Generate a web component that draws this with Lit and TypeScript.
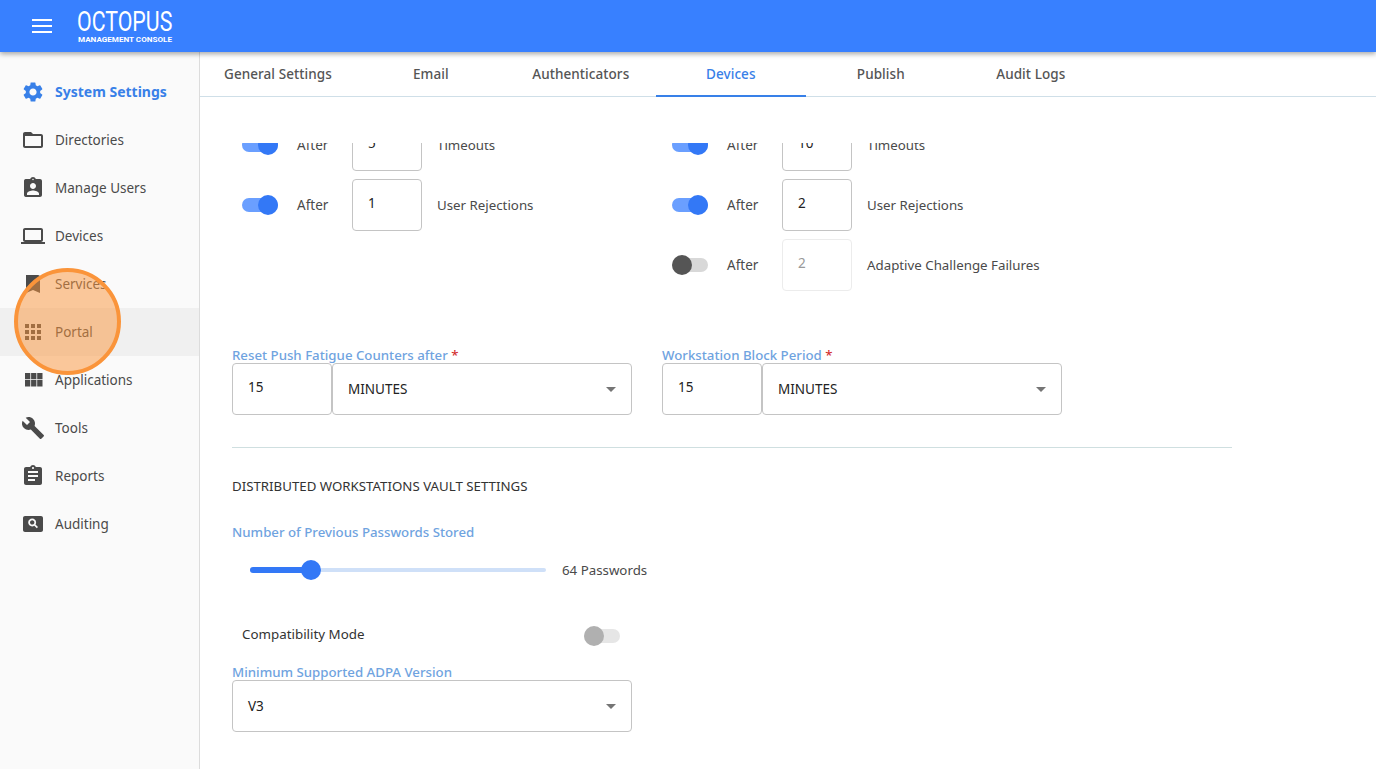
import { LitElement, html, css, svg } from 'lit';
import { customElement } from 'lit/decorators.js';

const icons: Record<string, unknown> = {
  settings: svg`<path d="M19.14 12.94c.04-.3.06-.61.06-.94 0-.32-.02-.64-.07-.94l2.03-1.58a.49.49 0 0 0 .12-.61l-1.92-3.32a.488.488 0 0 0-.59-.22l-2.39.96c-.5-.38-1.03-.7-1.62-.94l-.36-2.54a.484.484 0 0 0-.48-.41h-3.84c-.24 0-.43.17-.47.41l-.36 2.54c-.59.24-1.13.57-1.62.94l-2.39-.96c-.22-.08-.47 0-.59.22L2.74 8.87c-.12.21-.08.47.12.61l2.03 1.58c-.05.3-.09.63-.09.94s.02.64.07.94l-2.03 1.58a.49.49 0 0 0-.12.61l1.92 3.32c.12.22.37.29.59.22l2.39-.96c.5.38 1.03.7 1.62.94l.36 2.54c.05.24.24.41.48.41h3.84c.24 0 .44-.17.47-.41l.36-2.54c.59-.24 1.13-.56 1.62-.94l2.39.96c.22.08.47 0 .59-.22l1.92-3.32c.12-.22.07-.47-.12-.61l-2.01-1.58zM12 15.6c-1.98 0-3.6-1.62-3.6-3.6s1.62-3.6 3.6-3.6 3.6 1.62 3.6 3.6-1.62 3.6-3.6 3.6z"/>`,
  folder: svg`<path d="M20 6h-8l-2-2H4c-1.1 0-1.99.9-1.99 2L2 18c0 1.1.9 2 2 2h16c1.1 0 2-.9 2-2V8c0-1.1-.9-2-2-2zm0 12H4V8h16v10z"/>`,
  badge: svg`<path d="M19 3h-4.18C14.4 1.84 13.3 1 12 1s-2.4.84-2.82 2H5c-.14 0-.27.01-.4.04-.39.08-.74.28-1.01.55-.18.18-.33.4-.43.64-.1.23-.16.49-.16.77v14c0 .27.06.54.16.78s.25.45.43.64c.27.27.62.47 1.01.55.13.02.26.03.4.03h14c1.1 0 2-.9 2-2V5c0-1.1-.9-2-2-2zm-7-.25c.41 0 .75.34.75.75s-.34.75-.75.75-.75-.34-.75-.75.34-.75.75-.75zM12 7c1.66 0 3 1.34 3 3s-1.34 3-3 3-3-1.34-3-3 1.34-3 3-3zm6 12H6v-1.4c0-2 4-3.1 6-3.1s6 1.1 6 3.1V19z"/>`,
  laptop: svg`<path d="M20 18c1.1 0 1.99-.9 1.99-2L22 6c0-1.1-.9-2-2-2H4c-1.1 0-2 .9-2 2v10c0 1.1.9 2 2 2H0v2h24v-2h-4zM4 6h16v10H4V6z"/>`,
  services: svg`<path d="M17 3H5v18l7-3 7 3V5c0-1.1-.9-2-2-2z"/>`,
  apps: svg`<path d="M4 8h4V4H4v4zm6 12h4v-4h-4v4zm-6 0h4v-4H4v4zm0-6h4v-4H4v4zm6 0h4v-4h-4v4zm6-10v4h4V4h-4zm-6 4h4V4h-4v4zm6 6h4v-4h-4v4zm0 6h4v-4h-4v4z"/>`,
  grid: svg`<path d="M4 5h5.300v6.300H4zM10.100 5h5.300v6.300h-5.300zM16.200 5h5.300v6.300h-5.300zM4 12.100h5.300v6.400H4zM10.100 12.100h5.300v6.400h-5.300zM16.200 12.100h5.300v6.400h-5.300z"/>`,
  build: svg`<path d="M22.7 19l-9.100-9.100c.9-2.300.4-5-1.500-6.900-2-2-5-2.400-7.400-1.300L9 6 6 9 1.600 4.700C.4 7.100.9 10.100 2.900 12.100c1.900 1.900 4.600 2.400 6.900 1.500l9.100 9.100c.4.400 1 .4 1.400 0l2.300-2.300c.5-.4.500-1.100.1-1.400z"/>`,
  assignment: svg`<path d="M19 3h-4.180C14.400 1.840 13.300 1 12 1c-1.300 0-2.400.84-2.820 2H5c-1.100 0-2 .9-2 2v14c0 1.100.9 2 2 2h14c1.100 0 2-.9 2-2V5c0-1.100-.9-2-2-2zm-7 0c.55 0 1 .45 1 1s-.45 1-1 1-1-.45-1-1 .45-1 1-1zm2 14H7v-2h7v2zm3-4H7v-2h10v2zm0-4H7V7h10v2z"/>`,
  audit: svg`<path d="M20 4H4c-1.100 0-2 .9-2 2v12c0 1.100.9 2 2 2h16c1.100 0 2-.9 2-2V6c0-1.100-.9-2-2-2zm-4.200 12.300-2.500-2.500c-.7.4-1.400.6-2.100.6-2.200 0-4-1.700-4-3.900s1.800-3.900 4-3.900 3.900 1.700 3.900 3.900c0 .7-.2 1.500-.6 2.100l2.500 2.500-1.200 1.200zM11.200 8.200c-1.200 0-2.200 1-2.200 2.200s1 2.200 2.200 2.200 2.200-1 2.200-2.200-1-2.200-2.200-2.200z"/>`,
};

const nav = [
  { icon: 'settings', label: 'System Settings', active: true },
  { icon: 'folder', label: 'Directories' },
  { icon: 'badge', label: 'Manage Users' },
  { icon: 'laptop', label: 'Devices' },
  { icon: 'services', label: 'Services' },
  { icon: 'apps', label: 'Portal', hover: true },
  { icon: 'grid', label: 'Applications' },
  { icon: 'build', label: 'Tools' },
  { icon: 'assignment', label: 'Reports' },
  { icon: 'audit', label: 'Auditing' },
];

const tabs = ['General Settings', 'Email', 'Authenticators', 'Devices', 'Publish', 'Audit Logs'];

const columns = [
  [
    { value: '5', label: 'Timeouts', on: true },
    { value: '1', label: 'User Rejections', on: true },
  ],
  [
    { value: '10', label: 'Timeouts', on: true },
    { value: '2', label: 'User Rejections', on: true },
    { value: '2', label: 'Adaptive Challenge Failures', on: false },
  ],
];

@customElement('app-root')
export class AppRoot extends LitElement {
  static styles = css`
    :host {
      display: block;
      height: 769px;
      overflow: hidden;
      position: relative;
      font-family: 'Noto Sans', 'Open Sans', sans-serif;
      font-size: 13.5px;
      color: #4a4a4a;
      background: #fff;
    }

    .topbar {
      height: 52px;
      background: #3880ff;
      display: flex;
      align-items: center;
      padding-left: 32px;
      box-shadow: 0 2px 5px rgba(0, 0, 0, 0.35);
      position: relative;
      z-index: 2;
    }

    .burger {
      width: 20px;
      height: 14px;
      border-top: 2px solid #fff;
      border-bottom: 2px solid #fff;
      position: relative;
      box-sizing: border-box;
      margin-right: 25px;
    }

    .burger::after {
      content: '';
      position: absolute;
      left: 0;
      right: 0;
      top: 4px;
      height: 2px;
      background: #fff;
    }

    .logo {
      color: #fff;
      width: 95px;
      padding-top: 1px;
    }

    .logo-name {
      font-family: 'Roboto', sans-serif;
      font-weight: 400;
      font-size: 27px;
      line-height: 26px;
      transform: scaleX(0.79);
      transform-origin: left center;
      white-space: nowrap;
    }

    .logo-sub {
      font-family: 'Roboto', sans-serif;
      font-weight: 700;
      font-size: 8.1px;
      line-height: 9px;
      margin-left: 1px;
      white-space: nowrap;
    }

    .body {
      display: flex;
      height: 717px;
    }

    .sidebar {
      width: 199px;
      flex: none;
      background: #fafafa;
      border-right: 1px solid #dcdcdc;
      padding-top: 16px;
    }

    .nav-item {
      height: 48px;
      display: flex;
      align-items: center;
      padding-left: 21px;
      gap: 10px;
    }

    .nav-item svg {
      width: 24px;
      height: 24px;
      fill: #4a4a4a;
      flex: none;
    }

    .nav-item.hover {
      background: #f0f0f0;
    }

    .nav-item.active {
      color: #3880e8;
      font-weight: 700;
      font-size: 14px;
    }

    .nav-item.active span {
      margin-top: -2px;
    }

    .nav-item.active svg {
      fill: #3880e8;
    }

    .main {
      flex: 1;
      display: flex;
      flex-direction: column;
      min-width: 0;
    }

    .tabs {
      display: flex;
      height: 44px;
      border-bottom: 1px solid #cfdfe8;
      flex: none;
    }

    .tab {
      min-width: 150px;
      box-sizing: border-box;
      padding: 0 24px 1px;
      display: flex;
      align-items: center;
      justify-content: center;
      font-weight: 500;
      letter-spacing: 0.07px;
      color: #555;
      white-space: nowrap;
      margin-bottom: -1px;
    }

    .tab.selected {
      color: #3880e8;
      border-bottom: 2px solid #3880e8;
      padding-bottom: 0;
      padding-top: 1px;
    }

    .scroller {
      margin-top: 46px;
      overflow: hidden;
      flex: 1;
      padding: 0 32px;
    }

    .content {
      margin-top: -24px;
      width: 1000px;
    }

    .rules {
      display: grid;
      grid-template-columns: 430px 430px;
      height: 172px;
    }

    .rule {
      display: flex;
      align-items: center;
      height: 52px;
      margin-bottom: 8px;
      padding-left: 10px;
    }

    .rule .after {
      margin-left: 19px;
      width: 55px;
    }

    .rule .caption {
      margin-left: 15px;
      font-size: 13.3px;
    }

    .switch {
      width: 36px;
      height: 14px;
      border-radius: 7px;
      background: #6a9fff;
      position: relative;
      flex: none;
    }

    .switch::after {
      content: '';
      position: absolute;
      width: 20px;
      height: 20px;
      border-radius: 50%;
      top: -3px;
      right: 0;
      background: #3378f6;
    }

    .switch.off {
      background: #d8d8d8;
    }

    .switch.off::after {
      right: 16px;
      background: #555;
    }

    .switch.faded {
      background: #e6e6e6;
    }

    .switch.faded::after {
      background: #b0b0b0;
    }

    .box {
      box-sizing: border-box;
      height: 52px;
      border: 1px solid #c4c4c4;
      border-radius: 4px;
      padding: 0 15px 4px;
      display: flex;
      align-items: center;
      color: #222;
      background: #fff;
    }

    .box.number {
      width: 70px;
    }

    .box.wide {
      width: 100px;
    }

    .box.disabled {
      border-color: #ececec;
      color: #999;
    }

    .box.select {
      padding-bottom: 0;
      justify-content: space-between;
      padding-right: 15px;
    }

    .caret {
      width: 0;
      height: 0;
      border-left: 5px solid transparent;
      border-right: 5px solid transparent;
      border-top: 5px solid #757575;
    }

    .periods {
      display: grid;
      grid-template-columns: 430px 430px;
      margin-top: 56px;
    }

    .field-label {
      color: #6fa3e0;
      font-weight: 500;
      font-size: 13.25px;
      line-height: 16px;
    }

    .field-label em {
      color: #d32f2f;
      font-style: normal;
    }

    .combo {
      display: flex;
    }

    .combo .select {
      width: 300px;
    }

    .divider {
      height: 1px;
      background: #cfdfe0;
      margin-top: 32px;
    }

    .heading {
      margin-top: 29px;
      line-height: 18px;
      color: #333;
      font-size: 13.28px;
      text-transform: uppercase;
    }

    .slider-label {
      margin-top: 29px;
    }

    .slider {
      display: flex;
      align-items: center;
      margin-top: 20px;
      padding-left: 18px;
      height: 20px;
      gap: 16px;
      font-size: 13.3px;
    }

    .track {
      width: 296px;
      height: 4px;
      border-radius: 2px;
      background: #cfe0f8;
      position: relative;
    }

    .track-fill {
      height: 6px;
      margin-top: -1px;
      border-radius: 3px;
      background: #3378f6;
      position: absolute;
      left: 0;
    }

    .thumb {
      position: absolute;
      width: 20px;
      height: 20px;
      border-radius: 50%;
      background: #3378f6;
      top: -8px;
      margin-left: -10px;
    }

    .compat {
      display: flex;
      align-items: center;
      justify-content: space-between;
      width: 378px;
      padding-left: 10px;
      margin-top: 44px;
      height: 24px;
    }

    .compat-label {
      margin-bottom: 4px;
      color: #333;
      font-size: 13.35px;
    }

    .version-label {
      margin-top: 16px;
    }

    .box.version {
      width: 400px;
    }

    .spotlight {
      position: absolute;
      left: 14px;
      top: 268px;
      width: 107px;
      height: 107px;
      box-sizing: border-box;
      border-radius: 50%;
      border: 4px solid #fa943a;
      background: rgba(250, 148, 58, 0.5);
      z-index: 3;
    }
  `;

  private renderSwitch(cls = '') {
    return html`<div class="switch ${cls}"></div>`;
  }

  render() {
    return html`
      <header class="topbar">
        <div class="burger"></div>
        <div class="logo">
          <div class="logo-name">OCTOPUS</div>
          <div class="logo-sub">MANAGEMENT CONSOLE</div>
        </div>
      </header>
      <div class="body">
        <nav class="sidebar">
          ${nav.map(
            (item) => html`
              <div class="nav-item ${item.active ? 'active' : ''} ${item.hover ? 'hover' : ''}">
                <svg viewBox="0 0 24 24">${icons[item.icon]}</svg>
                <span>${item.label}</span>
              </div>
            `
          )}
        </nav>
        <main class="main">
          <div class="tabs">
            ${tabs.map((tab) => html`<div class="tab ${tab === 'Devices' ? 'selected' : ''}">${tab}</div>`)}
          </div>
          <div class="scroller">
            <div class="content">
              <div class="rules">
                ${columns.map(
                  (rows) => html`
                    <div>
                      ${rows.map(
                        (row) => html`
                          <div class="rule">
                            ${this.renderSwitch(row.on ? '' : 'off')}
                            <span class="after">After</span>
                            <div class="box number ${row.on ? '' : 'disabled'}">${row.value}</div>
                            <span class="caption">${row.label}</span>
                          </div>
                        `
                      )}
                    </div>
                  `
                )}
              </div>
              <div class="periods">
                ${['Reset Push Fatigue Counters after', 'Workstation Block Period'].map(
                  (label) => html`
                    <div>
                      <div class="field-label">${label} <em>*</em></div>
                      <div class="combo">
                        <div class="box wide">15</div>
                        <div class="box select">MINUTES<span class="caret"></span></div>
                      </div>
                    </div>
                  `
                )}
              </div>
              <div class="divider"></div>
              <div class="heading">Distributed Workstations Vault Settings</div>
              <div class="field-label slider-label">Number of Previous Passwords Stored</div>
              <div class="slider">
                <div class="track">
                  <div class="track-fill" style="width: 61px"></div>
                  <div class="thumb" style="left: 61px"></div>
                </div>
                <span>64 Passwords</span>
              </div>
              <div class="compat">
                <span class="compat-label">Compatibility Mode</span>
                ${this.renderSwitch('off faded')}
              </div>
              <div class="field-label version-label">Minimum Supported ADPA Version</div>
              <div class="box select version">V3<span class="caret"></span></div>
            </div>
          </div>
        </main>
      </div>
      <div class="spotlight"></div>
    `;
  }
}

declare global {
  interface HTMLElementTagNameMap {
    'app-root': AppRoot;
  }
}
